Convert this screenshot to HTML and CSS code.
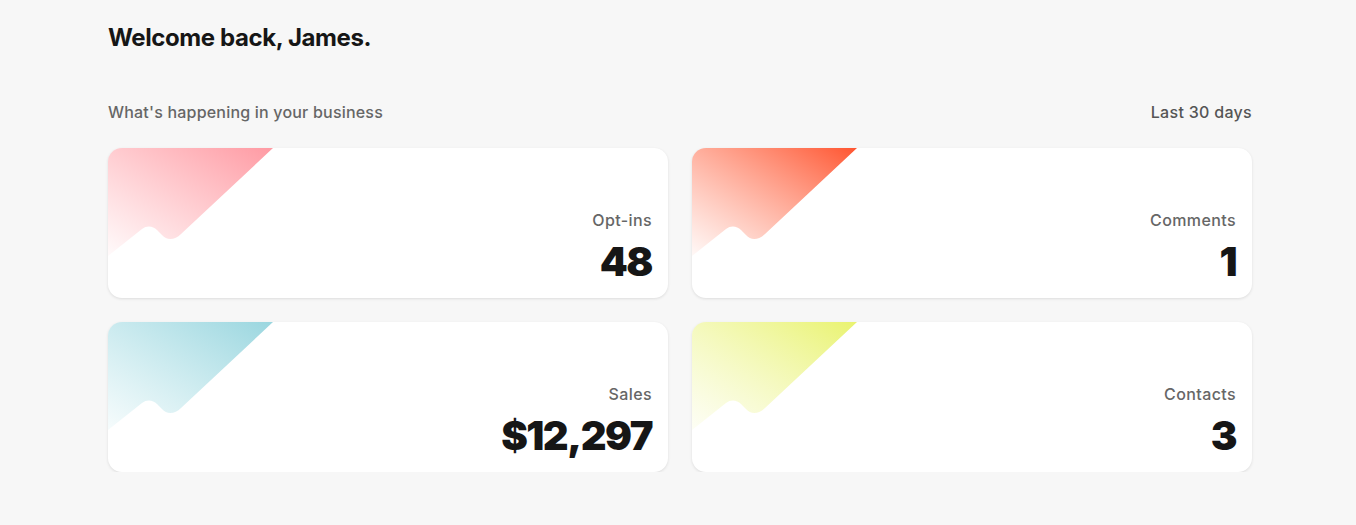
FILE: index.html
```html
<!DOCTYPE html>
<html lang="en">
<head>
<meta charset="utf-8">
<title>Dashboard</title>
<link rel="stylesheet" href="styles.css">
</head>
<body>
<main class="page">
  <h1 class="welcome">Welcome back, James.</h1>
  <div class="section-head">
    <span class="section-title">What's happening in your business</span>
    <span class="section-range">Last 30 days</span>
  </div>
  <div class="grid">
    <div class="card">
      <svg class="deco" viewBox="0 0 165 110" width="165" height="110" aria-hidden="true">
        <defs><linearGradient id="g1" x1="0" y1="1" x2="1" y2="0"><stop offset="0" stop-color="#ffa3aa" stop-opacity="0.05"/><stop offset="1" stop-color="#ff9aa3"/></linearGradient></defs>
        <path d="M0 0 H165 L73 86 C67 92 59 93 54 87 L49 82 C45 78 39 77 34 81 L0 108 Z" fill="url(#g1)"/>
      </svg>
      <div class="label">Opt-ins</div>
      <div class="value">48</div>
    </div>
    <div class="card">
      <svg class="deco" viewBox="0 0 165 110" width="165" height="110" aria-hidden="true">
        <defs><linearGradient id="g2" x1="0" y1="1" x2="1" y2="0"><stop offset="0" stop-color="#ff7a5c" stop-opacity="0.05"/><stop offset="1" stop-color="#ff5530"/></linearGradient></defs>
        <path d="M0 0 H165 L73 86 C67 92 59 93 54 87 L49 82 C45 78 39 77 34 81 L0 108 Z" fill="url(#g2)"/>
      </svg>
      <div class="label">Comments</div>
      <div class="value">1</div>
    </div>
    <div class="card">
      <svg class="deco" viewBox="0 0 165 110" width="165" height="110" aria-hidden="true">
        <defs><linearGradient id="g3" x1="0" y1="1" x2="1" y2="0"><stop offset="0" stop-color="#a6dde4" stop-opacity="0.1"/><stop offset="1" stop-color="#9ad6df"/></linearGradient></defs>
        <path d="M0 0 H165 L73 86 C67 92 59 93 54 87 L49 82 C45 78 39 77 34 81 L0 108 Z" fill="url(#g3)"/>
      </svg>
      <div class="label">Sales</div>
      <div class="value">$12,297</div>
    </div>
    <div class="card">
      <svg class="deco" viewBox="0 0 165 110" width="165" height="110" aria-hidden="true">
        <defs><linearGradient id="g4" x1="0" y1="1" x2="1" y2="0"><stop offset="0" stop-color="#eef59a" stop-opacity="0.1"/><stop offset="1" stop-color="#e9f36f"/></linearGradient></defs>
        <path d="M0 0 H165 L73 86 C67 92 59 93 54 87 L49 82 C45 78 39 77 34 81 L0 108 Z" fill="url(#g4)"/>
      </svg>
      <div class="label">Contacts</div>
      <div class="value">3</div>
    </div>
  </div>
</main>
</body>
</html>
```

FILE: styles.css
```css
* { box-sizing: border-box; }
html, body { margin: 0; padding: 0; }
body {
  background: #f7f7f7;
  font-family: Inter, "Noto Sans", "Liberation Sans", sans-serif;
  color: #1a1a1a;
}
.page {
  width: 1144px;
  margin-left: 108px;
}
.welcome {
  margin: 0;
  padding-top: 23px;
  font-size: 24px;
  line-height: 30px;
  font-weight: 700;
  letter-spacing: -0.4px;
  color: #161616;
}
.section-head {
  display: flex;
  justify-content: space-between;
  align-items: center;
  margin-top: 49px;
  height: 20px;
  font-size: 16px;
  font-weight: 500;
  letter-spacing: 0.2px;
  color: #666;
}
.section-range { color: #555; letter-spacing: 0.3px; }
.grid {
  margin-top: 26px;
  display: grid;
  grid-template-columns: 560px 560px;
  gap: 24px;
}
.card {
  position: relative;
  height: 150px;
  background: #fff;
  border-radius: 14px;
  overflow: hidden;
  box-shadow: 0 1px 3px rgba(0,0,0,0.11);
  display: flex;
  flex-direction: column;
  justify-content: flex-end;
  align-items: flex-end;
  padding: 0 16px 15px;
}
.deco {
  position: absolute;
  left: 0;
  top: 0;
  display: block;
}
.label {
  font-size: 16px;
  line-height: 20px;
  font-weight: 500;
  letter-spacing: 0.4px;
  color: #666;
  margin-bottom: 11px;
}
.value {
  font-size: 40px;
  line-height: 42px;
  font-weight: 900;
  letter-spacing: -1.5px;
  color: #161616;
}
```
